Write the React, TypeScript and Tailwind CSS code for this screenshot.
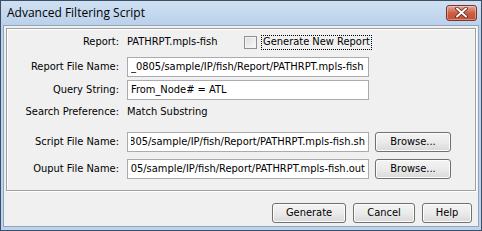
import React from 'react';

const ui = { fontFamily: "'DejaVu Sans Condensed', 'DejaVu Sans', sans-serif" };
const titleFont = { fontFamily: "'Open Sans', 'Noto Sans', sans-serif" };

function Label({ children }: { children: React.ReactNode }) {
  return <div className="w-[112px] shrink-0 text-right whitespace-nowrap">{children}</div>;
}

function Field({ value, end = true }: { value: string; end?: boolean }) {
  return (
    <div className="w-[242px] shrink-0 h-full border border-[#a9abae] bg-white px-[3px] flex items-center">
      <div className={`flex-1 overflow-hidden flex whitespace-nowrap ${end ? 'justify-end' : 'justify-start'}`}>{value}</div>
    </div>
  );
}

function Button({ label, width }: { label: string; width: string }) {
  return (
    <button
      className={`${width} h-full rounded-[3px] border border-[#707070] bg-gradient-to-b from-[#f4f4f4] via-[#ebebeb] to-[#d9d9d9] text-black shadow-[inset_0_0_0_1px_#fcfcfc]`}
    >
      {label}
    </button>
  );
}

function CloseButton() {
  return (
    <div className="w-[31px] h-[16px] rounded-[3px] border border-[#7b3428] bg-gradient-to-b from-[#e6a797] via-[#cd5d45] to-[#c44f35] flex items-center justify-center shadow-[inset_0_0_0_1px_rgba(255,255,255,0.35)]">
      <svg width="13" height="11" viewBox="0 0 13 11">
        <path d="M2 1.5 L11 9.5 M11 1.5 L2 9.5" stroke="#5a1f14" strokeWidth="3.6" strokeLinecap="round" />
        <path d="M2 1.5 L11 9.5 M11 1.5 L2 9.5" stroke="#ffffff" strokeWidth="2" strokeLinecap="round" />
      </svg>
    </div>
  );
}

export default function App() {
  return (
    <div className="w-[482px] h-[231px] border border-[#3b4e66] bg-[#bcd3eb] flex flex-col text-[11px] text-black" style={ui}>
      {/* title bar */}
      <div className="h-[24px] shrink-0 flex items-center justify-between pl-[6px] pr-[4px] pb-[1px] bg-gradient-to-b from-[#cfe0f2] to-[#bad1ea]">
        <span className="text-[12px] text-black" style={titleFont}>Advanced Filtering Script</span>
        <CloseButton />
      </div>

      {/* client */}
      <div className="flex-1 mx-[2px] mb-[3px] border border-[#8fa5bf] bg-[#f0f0f0] flex flex-col px-[2px] pt-[2px]">
        <div className="h-[163px] border border-[#a0a0a0] shadow-[inset_1px_1px_0_#ffffff,1px_1px_0_#ffffff] flex flex-col pt-[5px]">
          <div className="h-[16px] flex items-center gap-[8px]">
            <Label>Report:</Label>
            <div className="w-[109px] whitespace-nowrap">PATHRPT.mpls-fish</div>
            <div className="w-[13px] h-[13px] shrink-0 border border-[#8e8f8f] bg-gradient-to-br from-[#dcdcdc] to-[#fafafa] shadow-[inset_0_0_0_1px_#f4f4f4]" />
            <div className="-ml-[4px] h-[15px] border border-dotted border-black px-[1px] flex items-center whitespace-nowrap">Generate New Report</div>
          </div>

          <div className="h-[20px] mt-[7px] flex items-center gap-[8px]">
            <Label>Report File Name:</Label>
            <Field value="_0805/sample/IP/fish/Report/PATHRPT.mpls-fish" end={false} />
          </div>

          <div className="h-[20px] mt-[3px] flex items-center gap-[8px]">
            <Label>Query String:</Label>
            <Field value="From_Node# = ATL" end={false} />
          </div>

          <div className="h-[16px] mt-[4px] flex items-center gap-[8px]">
            <Label>Search Preference:</Label>
            <div className="whitespace-nowrap">Match Substring</div>
          </div>

          <div className="h-[20px] mt-[12px] flex items-center gap-[8px]">
            <Label>Script File Name:</Label>
            <Field value="/home/wandl/release_0805/sample/IP/fish/Report/PATHRPT.mpls-fish.sh" />
            <div className="h-[20px] -ml-[2px]">
              <Button label="Browse..." width="w-[76px]" />
            </div>
          </div>

          <div className="h-[20px] mt-[7px] flex items-center gap-[8px]">
            <Label>Ouput File Name:</Label>
            <Field value="/home/wandl/release_0805/sample/IP/fish/Report/PATHRPT.mpls-fish.out" />
            <div className="h-[20px] -ml-[2px]">
              <Button label="Browse..." width="w-[76px]" />
            </div>
          </div>
        </div>

        <div className="h-[20px] mt-[12px] flex justify-end gap-[7px] pr-[4px]">
          <Button label="Generate" width="w-[74px]" />
          <Button label="Cancel" width="w-[62px]" />
          <Button label="Help" width="w-[50px]" />
        </div>
      </div>
    </div>
  );
}
